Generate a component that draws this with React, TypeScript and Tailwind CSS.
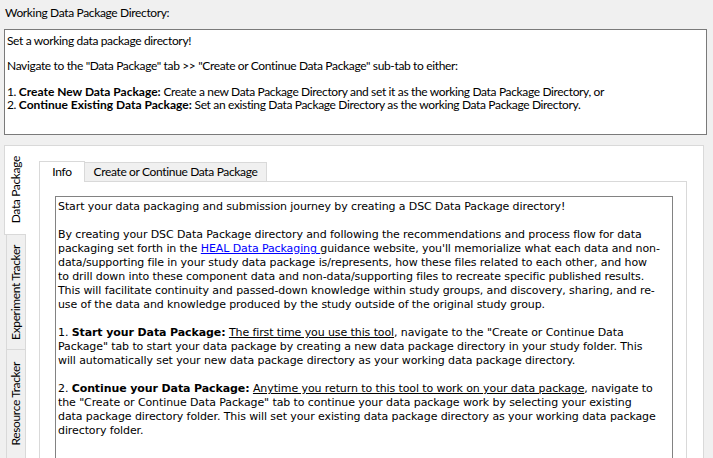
import React from 'react';

const ui = "font-['Lato','Liberation_Sans',sans-serif] text-[12px] tracking-[-0.35px]";
const verdana = "font-['DejaVu_Sans','Verdana',sans-serif] text-[11px] leading-[14px] tracking-[-0.1px]";

const VTab: React.FC<{ label: string; selected?: boolean; h: number }> = ({ label, selected, h }) => (
  <div
    style={{ height: h }}
    className={
      selected
        ? 'relative z-10 -mr-px flex w-[22px] items-center justify-center border border-r-0 border-[#d9d9d9] bg-white'
        : 'ml-[2px] flex w-[19px] items-center justify-center border border-r-0 border-t-0 border-[#d9d9d9] bg-[#f0f0f0]'
    }
  >
    <span className="rotate-180 whitespace-nowrap [writing-mode:vertical-rl]">{label}</span>
  </div>
);

const App: React.FC = () => {
  return (
    <div className={`h-[458px] w-[713px] overflow-hidden bg-[#f0f0f0] text-black ${ui}`}>
      {/* Working directory */}
      <div className="h-[29px] pl-[5px] pt-[5px] leading-[16px]">Working Data Package Directory:</div>
      <div className="ml-[4px] h-[106px] w-[703px] border border-[#7a7a7a] bg-white pl-[2px] pt-[4px] leading-[13px]">
        <p>Set a working data package directory!</p>
        <p className="mt-[12px]">
          Navigate to the "Data Package" tab &gt;&gt; "Create or Continue Data Package" sub-tab to either:
        </p>
        <p className="mt-[13px]">
          1. <b className="tracking-normal">Create New Data Package:</b> Create a new Data Package Directory and set it
          as the working Data Package Directory, or
        </p>
        <p>
          2. <b className="tracking-normal">Continue Existing Data Package:</b> Set an existing Data Package Directory as
          the working Data Package Directory.
        </p>
      </div>

      {/* Outer tab widget */}
      <div className="ml-[4px] mt-[10px] flex h-[314px]">
        <div className="flex w-[21px] flex-col">
          <VTab label="Data Package" selected h={91} />
          <VTab label="Experiment Tracker" h={116} />
          <VTab label="Resource Tracker" h={110} />
        </div>
        <div className="h-full w-[679px] border border-b-0 border-[#d9d9d9] bg-white pl-[13px] pr-[16px] pt-[14px]">
          {/* Inner tabs */}
          <div className="flex h-[21px] items-end">
            <div className="relative z-10 -mb-px flex h-[21px] w-[46px] items-center justify-center border border-b-0 border-[#d9d9d9] bg-white">
              Info
            </div>
            <div className="flex h-[19px] w-[182px] items-center justify-center border border-b-0 border-l-0 border-[#d9d9d9] bg-[#f0f0f0]">
              Create or Continue Data Package
            </div>
          </div>
          <div className="h-[300px] border border-b-0 border-[#d9d9d9] bg-white pl-[15px] pr-[13px] pt-[14px]">
            <div className={`h-[280px] border border-b-0 border-[#828282] pl-[2px] pt-[3px] ${verdana}`}>
              <div className="whitespace-nowrap">
                <p>Start your data packaging and submission journey by creating a DSC Data Package directory!</p>
                <p className="mt-[14px]">
                  By creating your DSC Data Package directory and following the recommendations and process flow for data
                  <br />
                  packaging set forth in the{' '}
                  <span className="text-[#0000ff] underline">HEAL Data Packaging </span>
                  guidance website, you'll memorialize what each data and non-
                  <br />
                  data/supporting file in your study data package is/represents, how these files related to each other, and how
                  <br />
                  to drill down into these component data and non-data/supporting files to recreate specific published results.
                  <br />
                  This will facilitate continuity and passed-down knowledge within study groups, and discovery, sharing, and re-
                  <br />
                  use of the data and knowledge produced by the study outside of the original study group.
                </p>
                <p className="mt-[14px]">
                  1. <b>Start your Data Package:</b> <span className="underline">The first time you use this tool</span>,
                  navigate to the "Create or Continue Data
                  <br />
                  Package" tab to start your data package by creating a new data package directory in your study folder. This
                  <br />
                  will automatically set your new data package directory as your working data package directory.
                </p>
                <p className="mt-[14px]">
                  2. <b>Continue your Data Package:</b>{' '}
                  <span className="underline">Anytime you return to this tool to work on your data package</span>, navigate
                  to
                  <br />
                  the "Create or Continue Data Package" tab to continue your data package work by selecting your existing
                  <br />
                  data package directory folder. This will set your existing data package directory as your working data package
                  <br />
                  directory folder.
                </p>
              </div>
            </div>
          </div>
        </div>
      </div>
    </div>
  );
};

export default App;
